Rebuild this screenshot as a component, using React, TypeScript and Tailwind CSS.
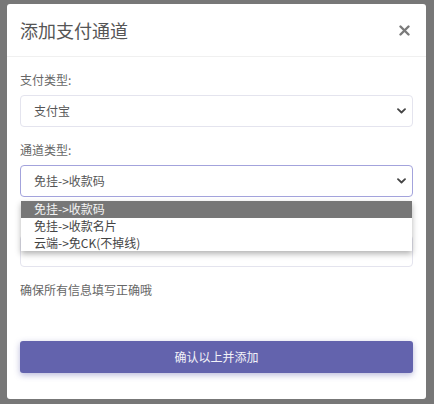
import React from "react";

const Chevron = () => (
  <svg width="9" height="6" viewBox="0 0 9 6" className="absolute right-[6px] top-1/2 -translate-y-1/2">
    <path d="M1 1.2 L4.5 4.5 L8 1.2" fill="none" stroke="#444" strokeWidth="1.8" strokeLinecap="round" strokeLinejoin="round" />
  </svg>
);

export default function App() {
  const font = { fontFamily: '"Noto Sans CJK SC", "Noto Sans", sans-serif' };
  return (
    <div className="w-[434px] h-[404px] bg-[#777777] pt-[4px] pl-[7px] overflow-hidden" style={font}>
      <div className="relative w-[419px] h-[395px] bg-white rounded-[3px] flex flex-col">
        <div className="h-[53px] border-b border-[#f0f0f0] flex items-center justify-between pl-[13px] pr-[16px]">
          <span className="text-[18px] text-[#555] leading-none">添加支付通道</span>
          <svg width="11" height="11" viewBox="0 0 11 11">
            <path d="M1.5 1.5 L9.5 9.5 M9.5 1.5 L1.5 9.5" stroke="#7a7a7a" strokeWidth="2.4" strokeLinecap="round" />
          </svg>
        </div>
        <div className="px-[13px] pt-[15px] flex flex-col">
          <div className="text-[12px] leading-[15px] text-[#666]">支付类型:</div>
          <div className="relative mt-[8px] h-[32px] border border-[#e4e4ee] rounded-[4px] flex items-center pl-[13px] text-[12px] text-[#555]">
            支付宝
            <Chevron />
          </div>
          <div className="mt-[15px] text-[12px] leading-[15px] text-[#666]">通道类型:</div>
          <div className="relative mt-[8px] h-[32px] border border-[#a3a3dc] rounded-[4px] flex items-center pl-[13px] text-[12px] text-[#555]">
            免挂-&gt;收款码
            <Chevron />
          </div>
          <div className="mt-[15px] h-[15px]"></div>
          <div className="mt-[8px] h-[32px] border border-[#e4e4ee] rounded-[4px]"></div>
          <div className="mt-[15px] text-[12px] leading-[15px] text-[#666]">确保所有信息填写正确哦</div>
          <div className="mt-[44px] h-[32px] bg-[#6363ad] rounded-[3px] flex items-center justify-center text-[12px] text-[#f2f2f8] shadow-[0_2px_6px_rgba(99,99,173,0.45)]">
            确认以上并添加
          </div>
        </div>
        <div className="absolute left-[14px] top-[197px] w-[391px] bg-white shadow-[0_3px_6px_rgba(0,0,0,0.3)] text-[12px] leading-[16.5px]">
          <div className="bg-[#777777] text-[#f4f4f4] pl-[13px] h-[17px]">免挂-&gt;收款码</div>
          <div className="text-[#444] pl-[13px] h-[17px]">免挂-&gt;收款名片</div>
          <div className="text-[#444] pl-[13px] h-[16px]">云端-&gt;免CK(不掉线)</div>
        </div>
      </div>
    </div>
  );
}
